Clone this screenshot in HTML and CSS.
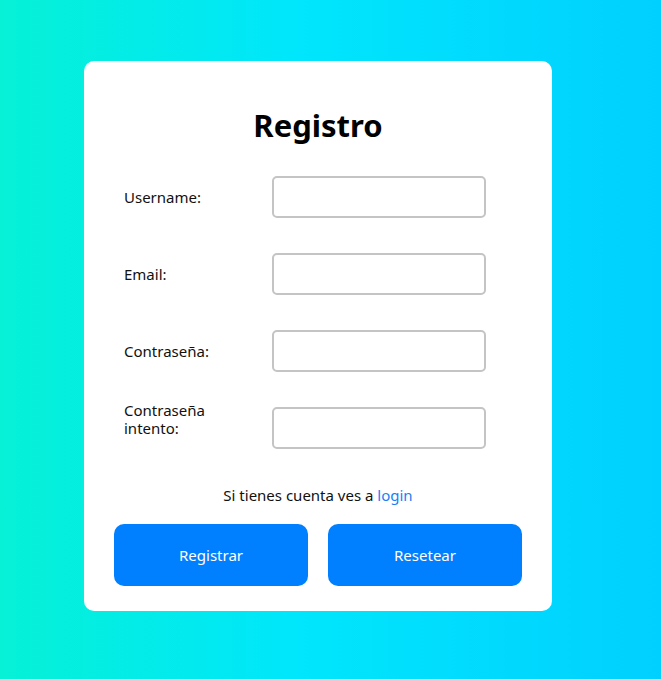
FILE: index.html
```html
<!DOCTYPE html>
<html lang="es">
<head>
<meta charset="utf-8">
<title>Registro</title>
<link rel="stylesheet" href="styles.css">
</head>
<body>
<main class="page">
  <form class="card">
    <h1 class="title">Registro</h1>
    <div class="fields">
      <label class="label" for="u">Username:</label>
      <input class="input" id="u" type="text">
      <label class="label" for="e">Email:</label>
      <input class="input" id="e" type="email">
      <label class="label" for="p">Contraseña:</label>
      <input class="input" id="p" type="password">
      <label class="label label-wrap" for="p2">Contraseña intento:</label>
      <input class="input" id="p2" type="password">
    </div>
    <p class="hint">Si tienes cuenta ves a <a class="link" href="#">login</a></p>
    <div class="actions">
      <button class="btn" type="submit">Registrar</button>
      <button class="btn" type="reset">Resetear</button>
    </div>
  </form>
</main>
</body>
</html>
```

FILE: styles.css
```css
html, body {
  margin: 0;
  height: 100%;
}
body {
  background: linear-gradient(to right, #06f1d6 0%, #00e6fc 45%, #00d0ff 100%);
  font-family: "Noto Sans", "DejaVu Sans", sans-serif;
  color: #111;
}
.page {
  padding: 61px 0 0 84px;
}
.card {
  width: 468px;
  height: 550px;
  box-sizing: border-box;
  background: #fff;
  border-radius: 10px;
  padding: 40px 30px 0 30px;
}
.title {
  margin: 0 0 27px 0;
  text-align: center;
  font-size: 31px;
  line-height: 48px;
  font-weight: 700;
  color: #000;
}
.fields {
  display: grid;
  grid-template-columns: 118px 214px;
  column-gap: 30px;
  row-gap: 35px;
  align-items: center;
  padding-left: 10px;
}
.label {
  font-size: 15px;
  line-height: 18px;
}
.label-wrap {
  align-self: start;
  margin-top: -6px;
}
.input {
  width: 214px;
  height: 42px;
  box-sizing: border-box;
  border: 2px solid #c4c4c4;
  border-radius: 5px;
  margin: 0;
  padding: 0 8px;
  font: inherit;
  background: #fff;
}
.hint {
  margin: 36px 0 0 0;
  text-align: center;
  font-size: 15px;
  line-height: 20px;
}
.link {
  color: #1a7ff5;
  text-decoration: none;
}
.actions {
  display: flex;
  gap: 20px;
  margin-top: 19px;
}
.btn {
  width: 194px;
  height: 62px;
  border: none;
  border-radius: 10px;
  background: #0080ff;
  color: #fff;
  font: inherit;
  font-size: 15px;
}
```
